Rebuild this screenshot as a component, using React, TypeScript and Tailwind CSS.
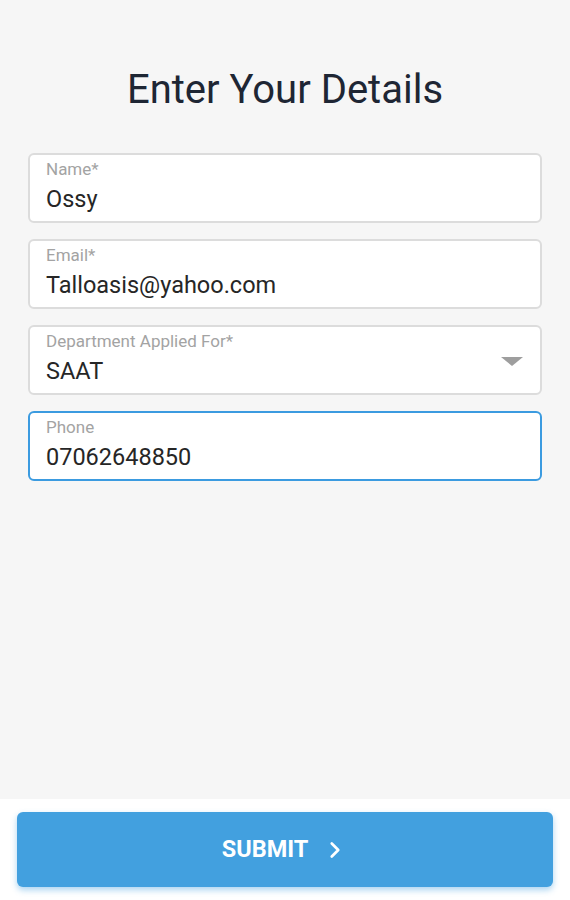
import { ChevronRight } from "lucide-react";

type Field = { label: string; value: string; active?: boolean; select?: boolean };

const fields: Field[] = [
  { label: "Name*", value: "Ossy" },
  { label: "Email*", value: "Talloasis@yahoo.com" },
  { label: "Department Applied For*", value: "SAAT", select: true },
  { label: "Phone", value: "07062648850", active: true },
];

function FormField({ field }: { field: Field }) {
  return (
    <div
      className={`relative flex h-[70px] flex-col rounded-[6px] bg-white pl-[16px] pr-12 pt-[4px] ${
        field.active ? "border-2 border-[#3b9be0]" : "border-2 border-[#dcdcdc]"
      }`}
    >
      <span className="text-[17px] leading-[20px] text-[#a3a3a3]">{field.label}</span>
      <span className="mt-[6px] text-[23.5px] leading-[28px] text-[#262626]">{field.value}</span>
      {field.select && (
        <svg
          className="absolute right-[17px] top-[30px]"
          width="22"
          height="9"
          viewBox="0 0 22 9"
        >
          <path d="M0 0 H22 L11 9 Z" fill="#9e9e9e" />
        </svg>
      )}
    </div>
  );
}

export default function App() {
  return (
    <div className="flex h-[900px] w-[570px] flex-col bg-white font-['Roboto',sans-serif]">
      <main className="flex-1 bg-[#f6f6f6] px-[28px] pt-[65px]">
        <h1 className="text-center text-[40px] leading-[50px] text-[#1e2634]">Enter Your Details</h1>
        <div className="mt-[38px] flex flex-col gap-[16px]">
          {fields.map((f) => (
            <FormField key={f.label} field={f} />
          ))}
        </div>
      </main>
      <div className="h-[101px] px-[17px] pt-[13px]">
        <button className="flex h-[75px] w-full items-center justify-center gap-[14px] rounded-[6px] bg-[#42a0df] text-[23.5px] font-bold text-white shadow-[0_3px_6px_rgba(66,160,223,0.45)]">
          SUBMIT
          <ChevronRight size={26} strokeWidth={2.5} />
        </button>
      </div>
    </div>
  );
}
